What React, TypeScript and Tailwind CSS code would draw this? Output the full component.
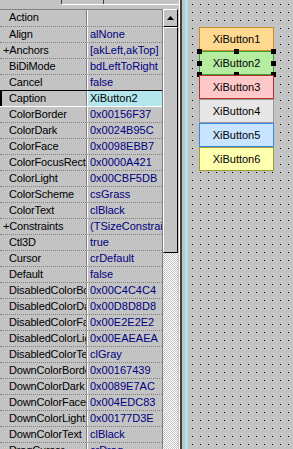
import React from "react";

type Row = { name: string; value: string; sel?: boolean };

const rows: Row[] = [
  { name: "Action", value: "" },
  { name: "Align", value: "alNone" },
  { name: "+Anchors", value: "[akLeft,akTop]" },
  { name: "BiDiMode", value: "bdLeftToRight" },
  { name: "Cancel", value: "false" },
  { name: "Caption", value: "XiButton2", sel: true },
  { name: "ColorBorder", value: "0x00156F37" },
  { name: "ColorDark", value: "0x0024B95C" },
  { name: "ColorFace", value: "0x0098EBB7" },
  { name: "ColorFocusRect", value: "0x0000A421" },
  { name: "ColorLight", value: "0x00CBF5DB" },
  { name: "ColorScheme", value: "csGrass" },
  { name: "ColorText", value: "clBlack" },
  { name: "+Constraints", value: "(TSizeConstraints)" },
  { name: "Ctl3D", value: "true" },
  { name: "Cursor", value: "crDefault" },
  { name: "Default", value: "false" },
  { name: "DisabledColorBorder", value: "0x00C4C4C4" },
  { name: "DisabledColorDark", value: "0x00D8D8D8" },
  { name: "DisabledColorFace", value: "0x00E2E2E2" },
  { name: "DisabledColorLight", value: "0x00EAEAEA" },
  { name: "DisabledColorText", value: "clGray" },
  { name: "DownColorBorder", value: "0x00167439" },
  { name: "DownColorDark", value: "0x0089E7AC" },
  { name: "DownColorFace", value: "0x004EDC83" },
  { name: "DownColorLight", value: "0x00177D3E" },
  { name: "DownColorText", value: "clBlack" },
  { name: "DragCursor", value: "crDrag" },
];

const buttons = [
  { label: "XiButton1", cls: "bg-[#ffd98f] border-[#c88c28]" },
  { label: "XiButton2", cls: "bg-[#b5eca0] border-[#3aa03a]" },
  { label: "XiButton3", cls: "bg-[#ffc8c8] border-[#b03030]" },
  { label: "XiButton4", cls: "bg-[#e6e6e6] border-[#9a9a9a]" },
  { label: "XiButton5", cls: "bg-[#c8e4ff] border-[#3a88e0]" },
  { label: "XiButton6", cls: "bg-[#ffffb0] border-[#a0a030]" },
];

function Handle({ cls }: { cls: string }) {
  return <div className={`absolute w-[5px] h-[5px] bg-black ${cls}`} />;
}

export default function App() {
  return (
    <div
      className="w-[293px] h-[449px] overflow-hidden bg-[#c3c3c3] flex text-[11px] leading-[15px]"
      style={{ fontFamily: '"Liberation Sans", Arial, sans-serif' }}
    >
      {/* Object inspector */}
      <div className="w-[179px] flex flex-col shrink-0">
        {/* tab strip */}
        <div className="h-[9px] flex shrink-0">
          <div className="w-[61px]" />
          <div className="w-px h-[4px] bg-[#404040]" />
          <div className="flex-1 flex flex-col">
            <div className="h-[4px] flex">
              <div className="w-[41px]" />
              <div className="w-px bg-[#404040]" />
            </div>
            <div className="h-px bg-white" />
          </div>
        </div>
        <div className="flex flex-1 min-h-0">
          {/* grid */}
          <div className="w-[163px] flex flex-col border-t border-[#808080] border-r border-r-[#808080]">
            {rows.map((r, i) => {
              const prevSel = i > 0 && rows[i - 1].sel;
              const topCls = i === 0 ? "" : r.sel ? "border-t border-black" : prevSel ? "border-t border-white" : "border-t border-dotted border-[#808080]";
              return (
                <div key={r.name} className={`flex h-[16px] shrink-0 ${topCls}`}>
                  <div
                    className={`w-[86px] shrink-0 overflow-hidden whitespace-nowrap text-black tracking-[-0.15px] ${
                      r.sel ? "border-l-2 border-black pl-[7px]" : "pl-[9px]"
                    }`}
                  >
                    {r.name.startsWith("+") ? <span className="-ml-[6px]">{r.name}</span> : r.name}
                  </div>
                  <div className="w-px bg-[#808080]" />
                  <div className="w-px bg-white" />
                  <div
                    className={`flex-1 overflow-hidden whitespace-nowrap pl-[2px] ${
                      r.sel ? "bg-[#b4e6ee] text-black" : "text-[#000080]"
                    }`}
                  >
                    {r.value}
                  </div>
                </div>
              );
            })}
          </div>
          {/* scrollbar */}
          <div className="w-[15px] flex flex-col shrink-0">
            <div className="h-[18px] bg-[#c3c3c3] border-t border-l border-white border-r border-b border-r-black border-b-black flex items-center justify-center shrink-0">
              <svg width="7" height="4" viewBox="0 0 7 4">
                <polygon points="3.5,0 7,4 0,4" fill="#000" />
              </svg>
            </div>
            <div className="h-[226px] bg-[#c3c3c3] border-t border-l border-white border-r border-b border-r-black border-b-black shrink-0" />
            <div className="flex-1 bg-[conic-gradient(#ffffff_25%,#c3c3c3_0_50%,#ffffff_0_75%,#c3c3c3_0)] bg-[length:2px_2px]" />
          </div>
        </div>
      </div>
      {/* splitter */}
      <div className="flex shrink-0">
        <div className="w-px bg-white" />
        <div className="w-[2px] bg-[#404040]" />
        <div className="w-[3px]" />
        <div className="w-[3px] bg-[#a8e4ec]" />
      </div>
      {/* form */}
      <div className="relative flex-1">
        <svg className="absolute inset-0" width="105" height="449">
          <defs>
            <pattern id="dots" width="8" height="8" x="4" y="4" patternUnits="userSpaceOnUse">
              <rect width="1" height="1" fill="#000" />
            </pattern>
          </defs>
          <rect width="100%" height="100%" fill="url(#dots)" />
        </svg>
        <div className="relative flex flex-col pt-[27px] pl-[11px]">
          {buttons.map((b, i) => (
            <div
              key={b.label}
              className={`relative w-[75px] h-[24px] border flex items-center justify-center text-black ${b.cls}`}
            >
              {b.label}
              {i === 1 && (
                <>
                  <Handle cls="-left-[3px] -top-[3px]" />
                  <Handle cls="left-[34px] -top-[3px]" />
                  <Handle cls="-right-[3px] -top-[3px]" />
                  <Handle cls="-left-[3px] top-[9px]" />
                  <Handle cls="-right-[3px] top-[9px]" />
                  <Handle cls="-left-[3px] -bottom-[3px]" />
                  <Handle cls="left-[34px] -bottom-[3px]" />
                  <Handle cls="-right-[3px] -bottom-[3px]" />
                </>
              )}
            </div>
          ))}
        </div>
      </div>
    </div>
  );
}
